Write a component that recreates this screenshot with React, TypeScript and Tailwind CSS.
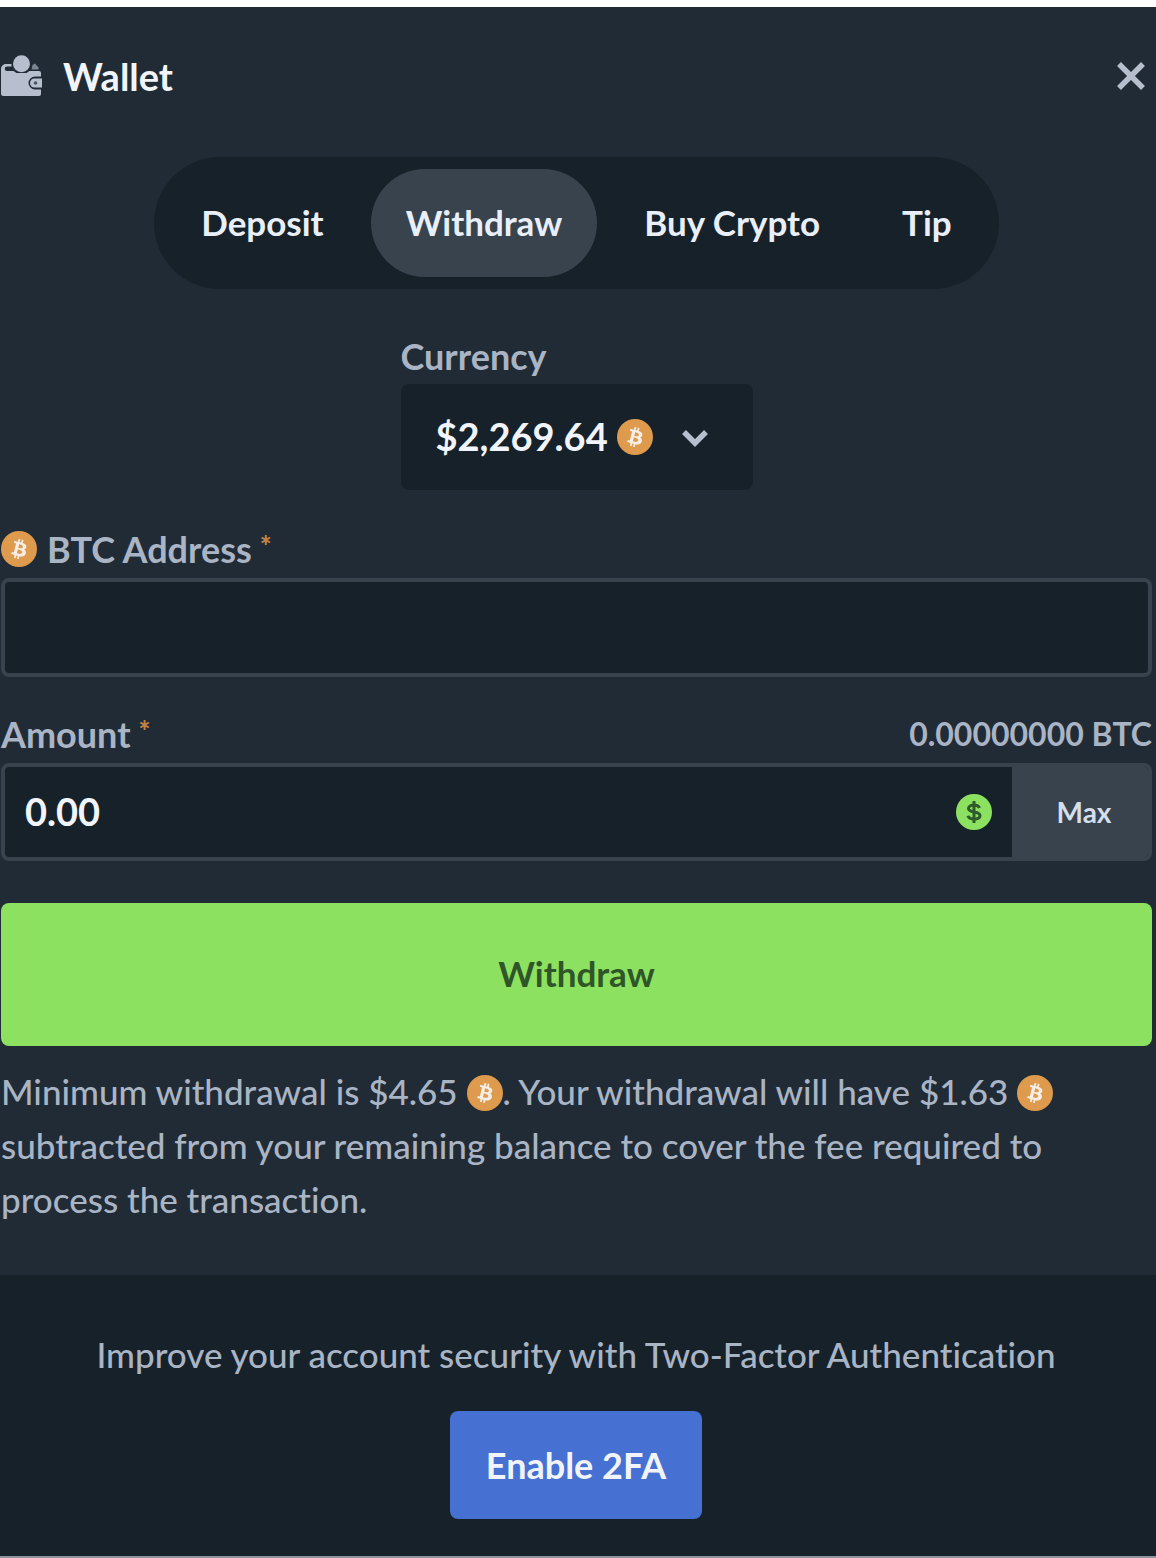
import React, { useState } from 'react';

const tabs = ['Deposit', 'Withdraw', 'Buy Crypto', 'Tip'];

const BitcoinIcon = ({ className = '' }: { className?: string }) => (
  <svg viewBox="0 0 32 32" className={`size-9 shrink-0 ${className}`} aria-hidden="true">
    <circle cx="16" cy="16" r="16" fill="#de9b4e" />
    <path
      fill="#f6efe8"
      transform="translate(1.6 1.6) scale(0.9)"
      d="M23.189 14.02c.314-2.096-1.283-3.223-3.465-3.975l.708-2.84-1.728-.43-.69 2.765c-.454-.114-.92-.22-1.385-.326l.695-2.783L15.596 6l-.708 2.839c-.376-.086-.746-.17-1.104-.26l.002-.009-2.384-.595-.46 1.846s1.283.294 1.256.312c.7.175.826.638.805 1.006l-.806 3.235c.048.012.11.03.18.057l-.183-.045-1.13 4.532c-.086.212-.303.531-.793.41.018.025-1.256-.313-1.256-.313l-.858 1.978 2.25.561c.418.105.828.215 1.231.318l-.715 2.872 1.727.43.708-2.84c.472.127.93.245 1.378.357l-.706 2.828 1.728.43.715-2.866c2.948.558 5.164.333 6.097-2.333.752-2.146-.037-3.385-1.588-4.192 1.13-.26 1.98-1.003 2.207-2.538zm-3.95 5.538c-.533 2.147-4.148.986-5.32.695l.95-3.805c1.172.293 4.929.872 4.37 3.11zm.535-5.569c-.487 1.953-3.495.96-4.47.717l.86-3.45c.975.243 4.118.696 3.61 2.733z"
    />
  </svg>
);

const WalletIcon = () => (
  <svg viewBox="0 0 42 42" className="size-[42px] shrink-0" fill="#b7bfcf" aria-hidden="true">
    <circle cx="20.500" cy="8.700" r="8.500" />
    <path d="M0 14a5 5 0 0 1 5-5h5.500v2.500H6a2 2 0 0 0 0 4.500h6.500l3 2h10l3-2H38a2 2 0 0 1 2 2v3.500h-6a6.500 6.500 0 0 0 0 13h6V39a2 2 0 0 1-2 2H2.500A2.500 2.500 0 0 1 0 38.500z" />
    <path d="M30.500 14.500l1-4.500 2.500-1.500 3.500 4v2z" opacity="0.6" />
    <path d="M33.500 23.500H41v9h-7.500a4.500 4.500 0 0 1 0-9z" />
    <circle cx="34.500" cy="28" r="1.800" fill="#4b5562" />
  </svg>
);

const DollarIcon = () => (
  <svg viewBox="0 0 36 36" className="size-9 shrink-0" fill="none" aria-hidden="true">
    <circle cx="18" cy="18" r="18" fill="#8ce260" />
    <path
      d="M18 7v22M23.500 14c-.8-2-2.800-3-5.500-3-3.200 0-5.500 1.300-5.500 3.500 0 4.800 11.500 2.200 11.500 7 0 2.300-2.500 3.600-6 3.600-3 0-5.300-1.100-6.200-3.300"
      stroke="#2f5a2c"
      strokeWidth="3"
    />
  </svg>
);

const Required = () => <span className="ml-2 pb-2 text-[28px] leading-8 font-black text-[#c08346]">*</span>;

export default function App() {
  const [active, setActive] = useState('Withdraw');
  const [address, setAddress] = useState('');
  const [amount, setAmount] = useState('0.00');

  return (
    <div className="border-t-[7px] border-b-2 border-t-white border-b-[#8d96a0] bg-[#212b35] font-['Lato','Open_Sans',sans-serif] text-[35px] leading-[54px] font-medium text-[#a9b4c4] [font-variant-ligatures:none]">
      <main className="pr-1 pl-px">
        <header className="flex items-center pt-[42px] pr-1">
          <WalletIcon />
          <h1 className="ml-5 text-[38px] font-bold text-[#f1f5fb]">Wallet</h1>
          <button type="button" aria-label="Close" className="ml-auto">
            <svg viewBox="0 0 32 32" className="size-8" aria-hidden="true">
              <path d="M3 4l24 24M27 4L3 28" stroke="#b7bfcf" strokeWidth="5.500" />
            </svg>
          </button>
        </header>

        <nav className="mx-auto mt-[54px] flex w-fit gap-3 rounded-full bg-[#17212a] p-3">
          {tabs.map((tab) => (
            <button
              key={tab}
              type="button"
              onClick={() => setActive(tab)}
              className={`h-[108px] rounded-full px-[35px] pb-0.5 font-bold text-[#e9eff8] ${active === tab ? 'bg-[#38434e]' : ''}`}
            >
              {tab}
            </button>
          ))}
        </nav>

        <div className="mx-auto mt-10 w-[352px]">
          <label htmlFor="currency" className="block pb-px text-[36px] font-bold">Currency</label>
          <div className="relative">
            <select
              id="currency"
              className="block h-[106px] w-full appearance-none rounded-lg bg-[#17212a] pb-0.5 pl-[35px] text-[38px] font-bold text-[#f1f5fb]"
            >
              <option>$2,269.64</option>
            </select>
            <div className="pointer-events-none absolute inset-y-0 right-11 flex items-center gap-7">
              <BitcoinIcon />
              <svg viewBox="0 0 28 28" className="size-7" fill="none" aria-hidden="true">
                <path d="M3 9l11 11L25 9" stroke="#b7bfcf" strokeWidth="5.500" />
              </svg>
            </div>
          </div>
        </div>

        <label htmlFor="address" className="mt-8 mb-0.5 flex items-center text-[36px] font-bold">
          <BitcoinIcon className="mr-2.5" />
          BTC Address
          <Required />
        </label>
        <input
          id="address"
          type="text"
          value={address}
          onChange={(e) => setAddress(e.target.value)}
          className="block h-[99px] w-full rounded-lg border-4 border-[#38434e] bg-[#17212a] px-5 font-bold text-[#f1f5fb]"
        />

        <div className="mt-[30px] mb-0.5 flex items-center justify-between font-bold">
          <label htmlFor="amount" className="flex items-center text-[36px]">
            Amount
            <Required />
          </label>
          <span className="text-[32px]">0.00000000 BTC</span>
        </div>
        <div className="flex h-[98px] overflow-hidden rounded-lg border-4 border-[#38434e] bg-[#17212a]">
          <input
            id="amount"
            type="text"
            value={amount}
            onChange={(e) => setAmount(e.target.value)}
            className="min-w-0 flex-1 px-5 pb-0.5 text-[38px] font-bold text-[#f1f5fb]"
          />
          <div className="flex items-center pr-5">
            <DollarIcon />
          </div>
          <button type="button" className="w-[136px] bg-[#38434e] pl-2 text-[28px] font-bold text-[#d5deeb]">
            Max
          </button>
        </div>

        <button
          type="button"
          className="mt-[42px] block h-[143px] w-full rounded-lg bg-[#8ce260] pb-1 font-bold text-[#2f5529]"
        >
          Withdraw
        </button>

        <p className="mt-[18px] pb-[49px]">
          Minimum withdrawal is $4.65 <BitcoinIcon className="inline align-[-6px]" />. Your withdrawal will have
          $1.63 <BitcoinIcon className="inline align-[-6px]" /> subtracted from your remaining balance to cover the
          fee required to process the transaction.
        </p>
      </main>

      <footer className="flex flex-col items-center bg-[#17212a] pt-[52px] pr-1 pb-[37px]">
        <p className="text-center">Improve your account security with Two-Factor Authentication</p>
        <button
          type="button"
          className="mt-[30px] h-[108px] rounded-lg bg-[#4670d1] px-9 text-[36px] font-bold text-[#f1f5fb]"
        >
          Enable 2FA
        </button>
      </footer>
    </div>
  );
}
